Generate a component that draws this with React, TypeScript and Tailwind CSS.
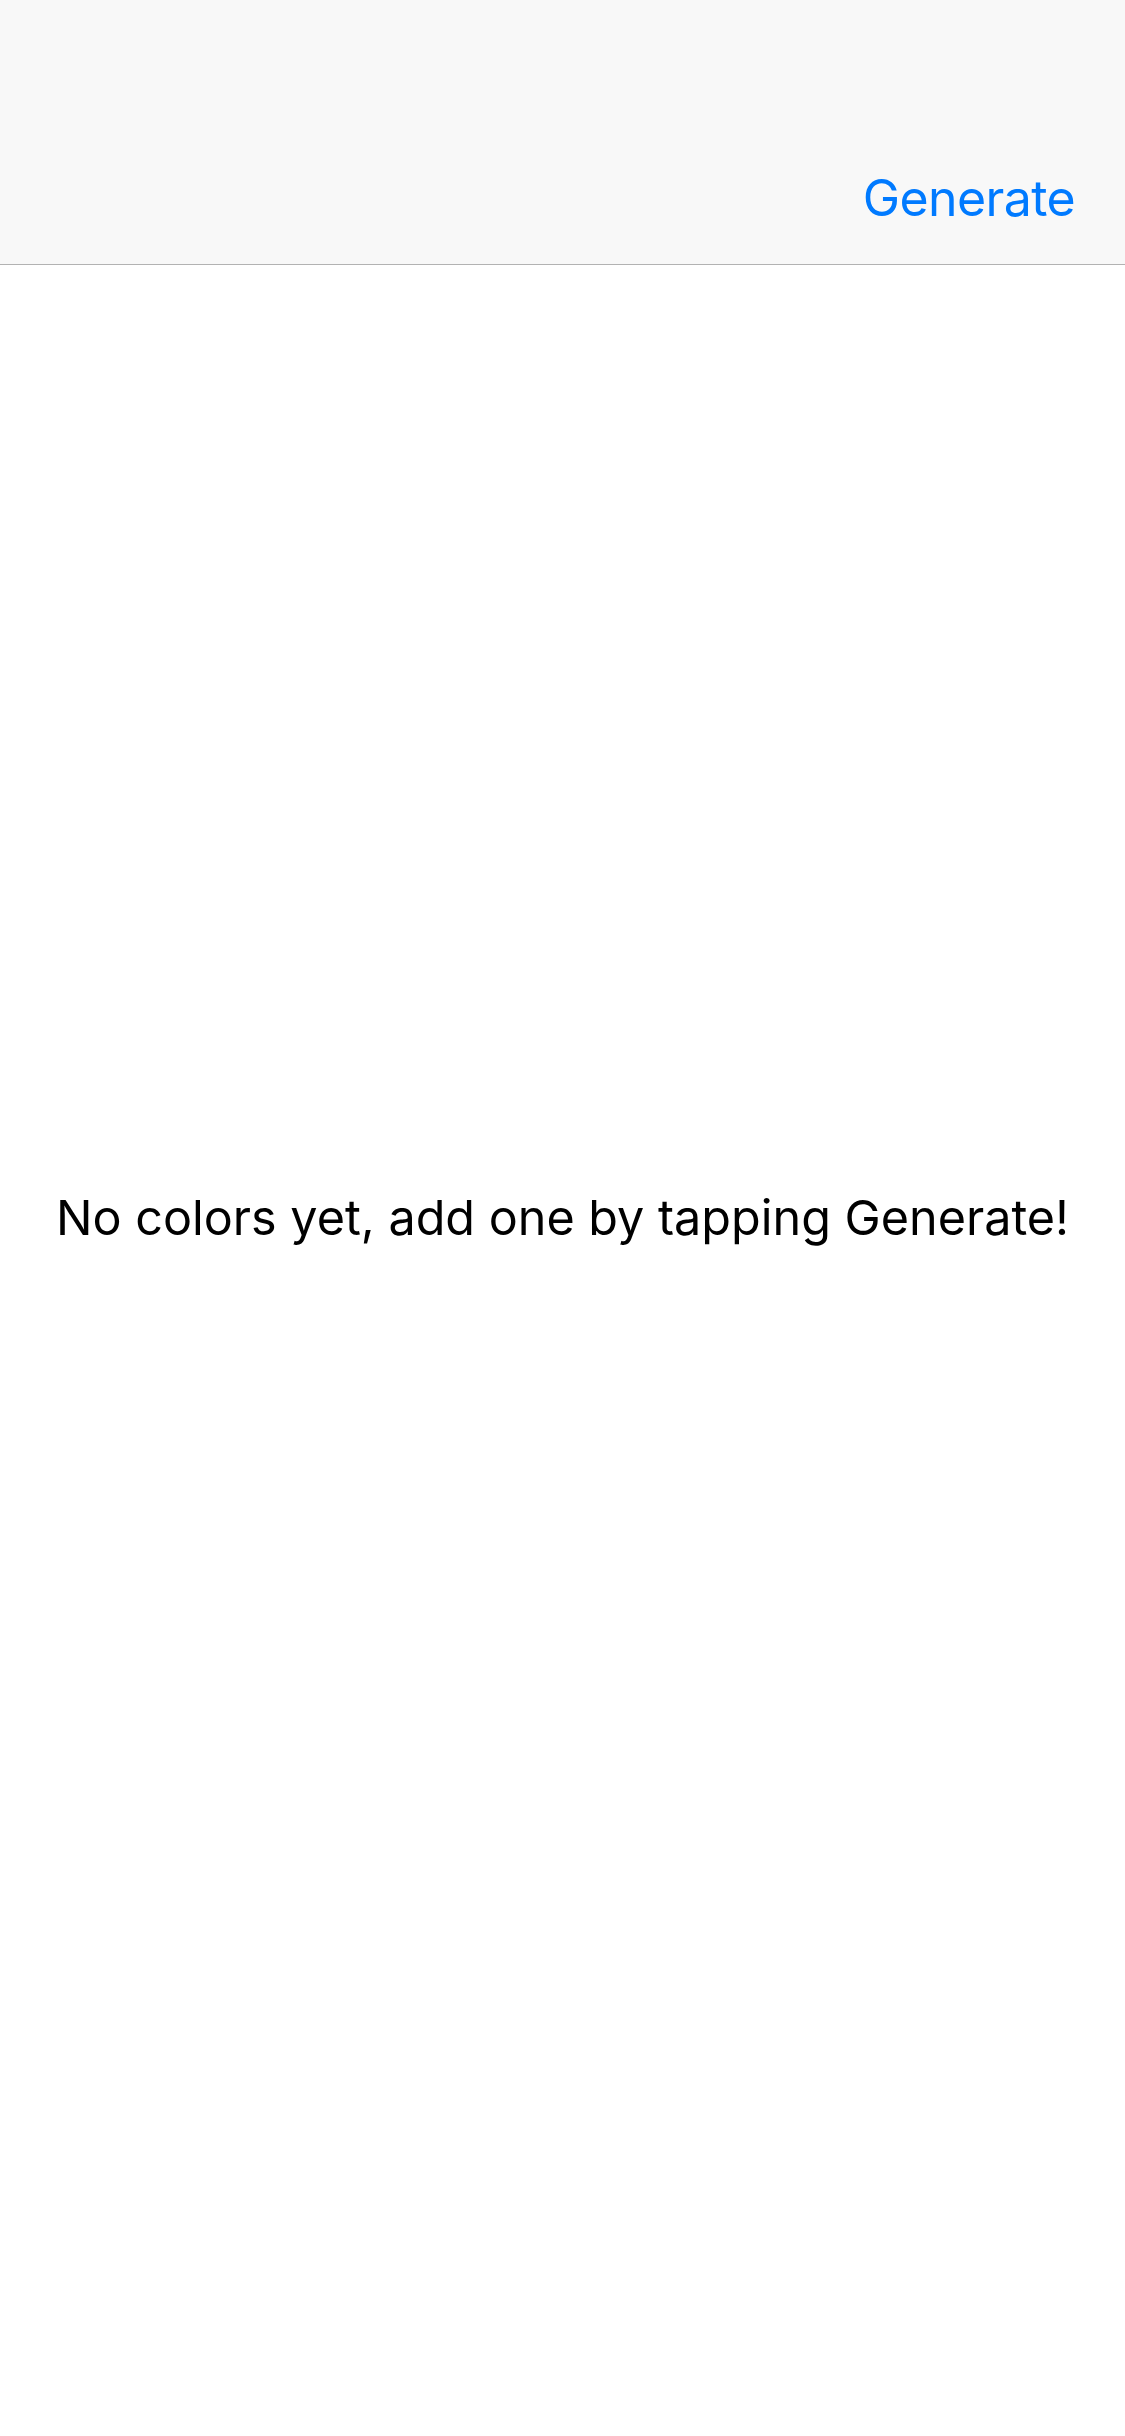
import React from "react";

export default function App() {
  return (
    <div
      className="w-[1125px] h-[2436px] bg-white flex flex-col"
      style={{ fontFamily: "Inter, 'Liberation Sans', sans-serif" }}
    >
      <div className="h-[265px] bg-[#f8f8f8] border-b border-[#b2b2b2] flex items-end justify-end pr-[50px] pb-[36px] shrink-0">
        <span className="text-[#007aff] text-[50px] leading-[60px] tracking-[-0.6px]">Generate</span>
      </div>
      <div className="flex-1 flex items-start justify-center pt-[924px]">
        <span className="text-black text-[48.5px] leading-[58px]">
          No colors yet, add one by tapping Generate!
        </span>
      </div>
    </div>
  );
}
